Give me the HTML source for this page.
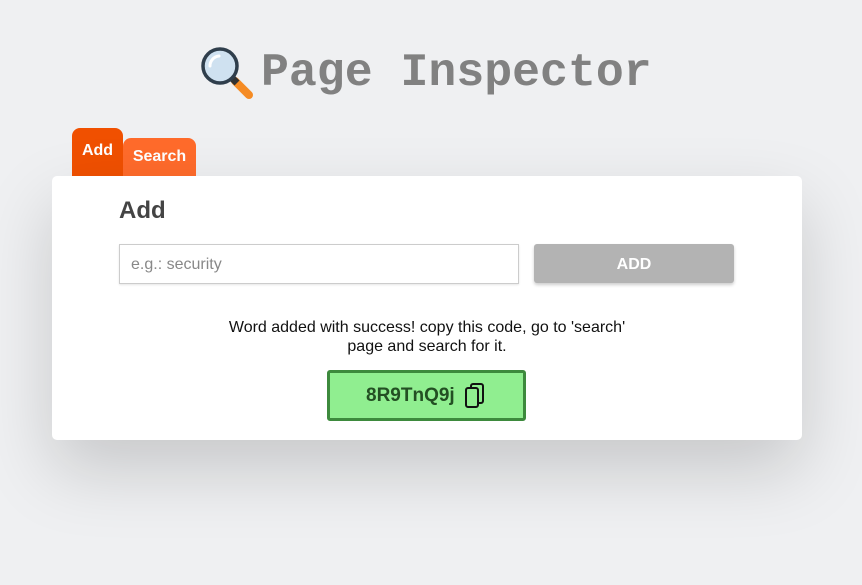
<!DOCTYPE html>
<html><head><style>
body{margin:0;width:862px;height:585px;background:#eff0f2;font-family:"Liberation Sans",sans-serif;position:relative;overflow:hidden}
.t{position:absolute;left:261px;top:43px;font:bold 46.5px "Liberation Mono",monospace;color:#818181;line-height:60px}
.tab{position:absolute;color:#fff;font-weight:bold;font-size:16px;text-align:center;border-radius:8px 8px 0 0}
.card{position:absolute;left:52px;top:176px;width:750px;height:264px;background:#fff;border-radius:5px;box-shadow:0 30px 70px rgba(0,0,0,.17)}
</style></head><body>
<svg style="position:absolute;left:198px;top:46px" width="58" height="54" viewBox="0 0 58 54">
<line x1="37" y1="35" x2="51" y2="49" stroke="#f58b24" stroke-width="8" stroke-linecap="round"/>
<line x1="34" y1="32" x2="39" y2="37" stroke="#333" stroke-width="7"/>
<circle cx="22" cy="20" r="17" fill="#cfe1f0" stroke="#2f3e4c" stroke-width="3.5"/>
<path d="M12 20a10 10 0 0 1 9-10" stroke="#fff" stroke-width="3" fill="none" stroke-linecap="round"/>
</svg>
<div class="t">Page Inspector</div>
<div class="tab" style="left:72px;top:128px;width:51px;height:48px;line-height:46px;background:#f05000">Add</div>
<div class="tab" style="left:123px;top:138px;width:73px;height:38px;line-height:38px;background:#ff6b2b">Search</div>
<div class="card">
<div style="position:absolute;left:67px;top:21px;font-size:24px;font-weight:bold;color:#444;line-height:28px">Add</div>
<div style="position:absolute;left:67px;top:68px;height:38px;border:1px solid #ccc;box-shadow:0 1px 2px rgba(0,0,0,.1);font-size:16px;color:#888;line-height:40px;padding-left:11px;width:387px">e.g.: security</div>
<div style="position:absolute;left:482px;top:68px;width:200px;height:39px;background:#b3b3b3;border-radius:3px;box-shadow:0 2px 3px rgba(0,0,0,.2);color:#fff;font-weight:bold;font-size:16px;text-align:center;line-height:41px">ADD</div>
<div style="position:absolute;left:0;width:750px;top:142px;text-align:center;font-size:16px;line-height:19px;color:#111">Word added with success! copy this code, go to 'search'<br>page and search for it.</div>
<div style="position:absolute;left:275px;top:194px;width:199px;height:51px;background:#90ee90;border:3px solid #3d8a3d;border-radius:3px;box-sizing:border-box;color:#234f23;font-weight:bold;font-size:19px;line-height:46px;padding-left:36px">8R9TnQ9j
<svg style="position:absolute;left:133px;top:9px" width="26" height="28" viewBox="0 0 26 28"><rect x="8" y="2" width="12" height="19" rx="2" fill="none" stroke="#111" stroke-width="2"/><rect x="3" y="6" width="12" height="19" rx="2" fill="#90ee90" stroke="#111" stroke-width="2"/></svg></div>
</div>
</body></html>
